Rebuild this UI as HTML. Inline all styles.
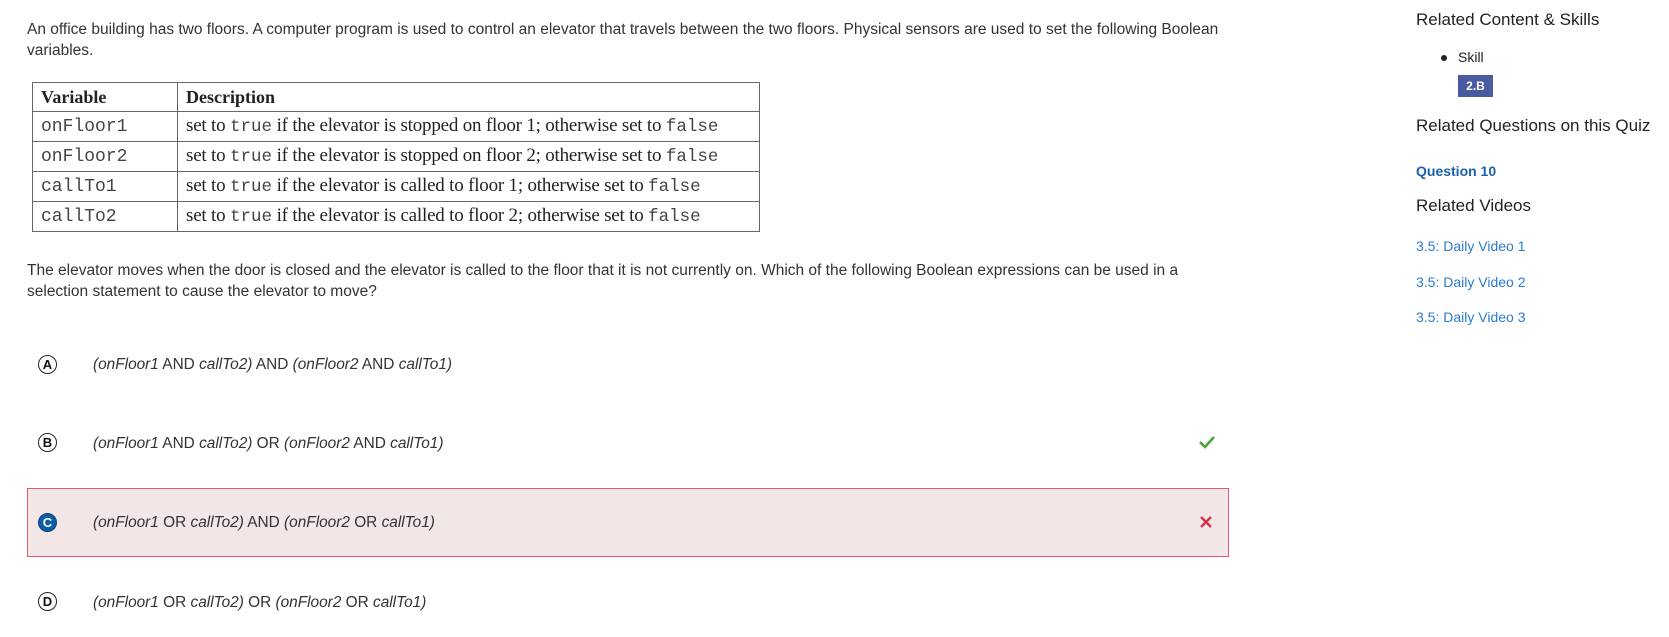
<!DOCTYPE html>
<html><head><meta charset="utf-8"><style>
body{margin:0;width:1669px;height:637px;background:#fff;position:relative;overflow:hidden;font-family:"Liberation Sans",Arial,sans-serif;color:#333}
.a{position:absolute;white-space:nowrap}
p.t{position:absolute;left:27px;margin:0;font-size:15.5px;line-height:21px;color:#333}
table{position:absolute;left:32px;top:82px;width:728px;border-collapse:collapse;font-family:"Liberation Serif",serif;font-size:19px;color:#222}
td{border:1.5px solid #666;height:28px;padding:0 8px;line-height:28px;white-space:nowrap;letter-spacing:-0.2px}
td.m{font-family:"Liberation Mono",monospace;font-size:18px;color:#444;letter-spacing:0}
code{font-family:"Liberation Mono",monospace;font-size:17.5px;color:#444;letter-spacing:0}
th{border:1.5px solid #666;height:28px;line-height:28px;text-align:left;padding:0 8px;font-weight:bold;font-size:18px}
.circ{position:absolute;left:38px;width:17px;height:17px;border:1.5px solid #222;border-radius:50%;font-weight:bold;font-size:13px;text-align:center;line-height:17px;color:#111}
.opt{position:absolute;left:93px;font-size:15.4px;color:#333;white-space:nowrap}
.opt i{font-style:italic}
.sb{position:absolute;left:1416px;white-space:nowrap}
.lnk{color:#2b7bd0;font-size:14px}
</style></head><body>
<p class="t" style="top:19px">An office building has two floors. A computer program is used to control an elevator that travels between the two floors. Physical sensors are used to set the following Boolean<br>variables.</p>
<table>
<tr><th style="width:128px">Variable</th><th>Description</th></tr>
<tr><td class="m">onFloor1</td><td>set to <code>true</code> if the elevator is stopped on floor 1; otherwise set to <code>false</code></td></tr>
<tr><td class="m">onFloor2</td><td>set to <code>true</code> if the elevator is stopped on floor 2; otherwise set to <code>false</code></td></tr>
<tr><td class="m">callTo1</td><td>set to <code>true</code> if the elevator is called to floor 1; otherwise set to <code>false</code></td></tr>
<tr><td class="m">callTo2</td><td>set to <code>true</code> if the elevator is called to floor 2; otherwise set to <code>false</code></td></tr>
</table>
<p class="t" style="top:260px">The elevator moves when the door is closed and the elevator is called to the floor that it is not currently on. Which of the following Boolean expressions can be used in a<br>selection statement to cause the elevator to move?</p>

<div class="circ" style="top:355px">A</div>
<div class="opt" style="top:356px"><i>(onFloor1</i> AND <i>callTo2)</i> AND <i>(onFloor2</i> AND <i>callTo1)</i></div>
<div class="circ" style="top:433px">B</div>
<div class="opt" style="top:435px"><i>(onFloor1</i> AND <i>callTo2)</i> OR <i>(onFloor2</i> AND <i>callTo1)</i></div>
<svg class="a" style="left:1198px;top:435px" width="18" height="14" viewBox="0 0 18 14"><path d="M2 7 L7 12 L16 2" stroke="#4aa43a" stroke-width="2.6" fill="none"/></svg>
<div class="a" style="left:27px;top:488px;width:1200px;height:67px;background:#f2e6e6;border:1.5px solid #e05a6a"></div>
<div class="circ" style="top:513px;background:#0a5ea8;border-color:#0a3f78;color:#fff">C</div>
<div class="opt" style="top:514px"><i>(onFloor1</i> OR <i>callTo2)</i> AND <i>(onFloor2</i> OR <i>callTo1)</i></div>
<svg class="a" style="left:1199px;top:515px" width="14" height="14" viewBox="0 0 14 14"><path d="M2 2 L12 12 M12 2 L2 12" stroke="#d0344a" stroke-width="2.4"/></svg>
<div class="circ" style="top:592px">D</div>
<div class="opt" style="top:594px"><i>(onFloor1</i> OR <i>callTo2)</i> OR <i>(onFloor2</i> OR <i>callTo1)</i></div>

<div class="sb" style="top:10px;font-size:17px;color:#222">Related Content &amp; Skills</div>
<div class="a" style="left:1441px;top:55px;width:6px;height:6px;border-radius:50%;background:#222"></div>
<div class="a" style="left:1458px;top:49px;font-size:14px;color:#222">Skill</div>
<div class="a" style="left:1458px;top:75px;width:35px;height:22px;background:#4a5aa0;color:#fff;font-weight:bold;font-size:12px;line-height:22px;text-align:center">2.B</div>
<div class="sb" style="top:116px;font-size:17px;color:#222">Related Questions on this Quiz</div>
<div class="sb" style="top:163px;font-size:14px;font-weight:bold;color:#1b62ad">Question 10</div>
<div class="sb" style="top:196px;font-size:17px;color:#222">Related Videos</div>
<div class="sb lnk" style="top:238px">3.5: Daily Video 1</div>
<div class="sb lnk" style="top:274px">3.5: Daily Video 2</div>
<div class="sb lnk" style="top:309px">3.5: Daily Video 3</div>
</body></html>
